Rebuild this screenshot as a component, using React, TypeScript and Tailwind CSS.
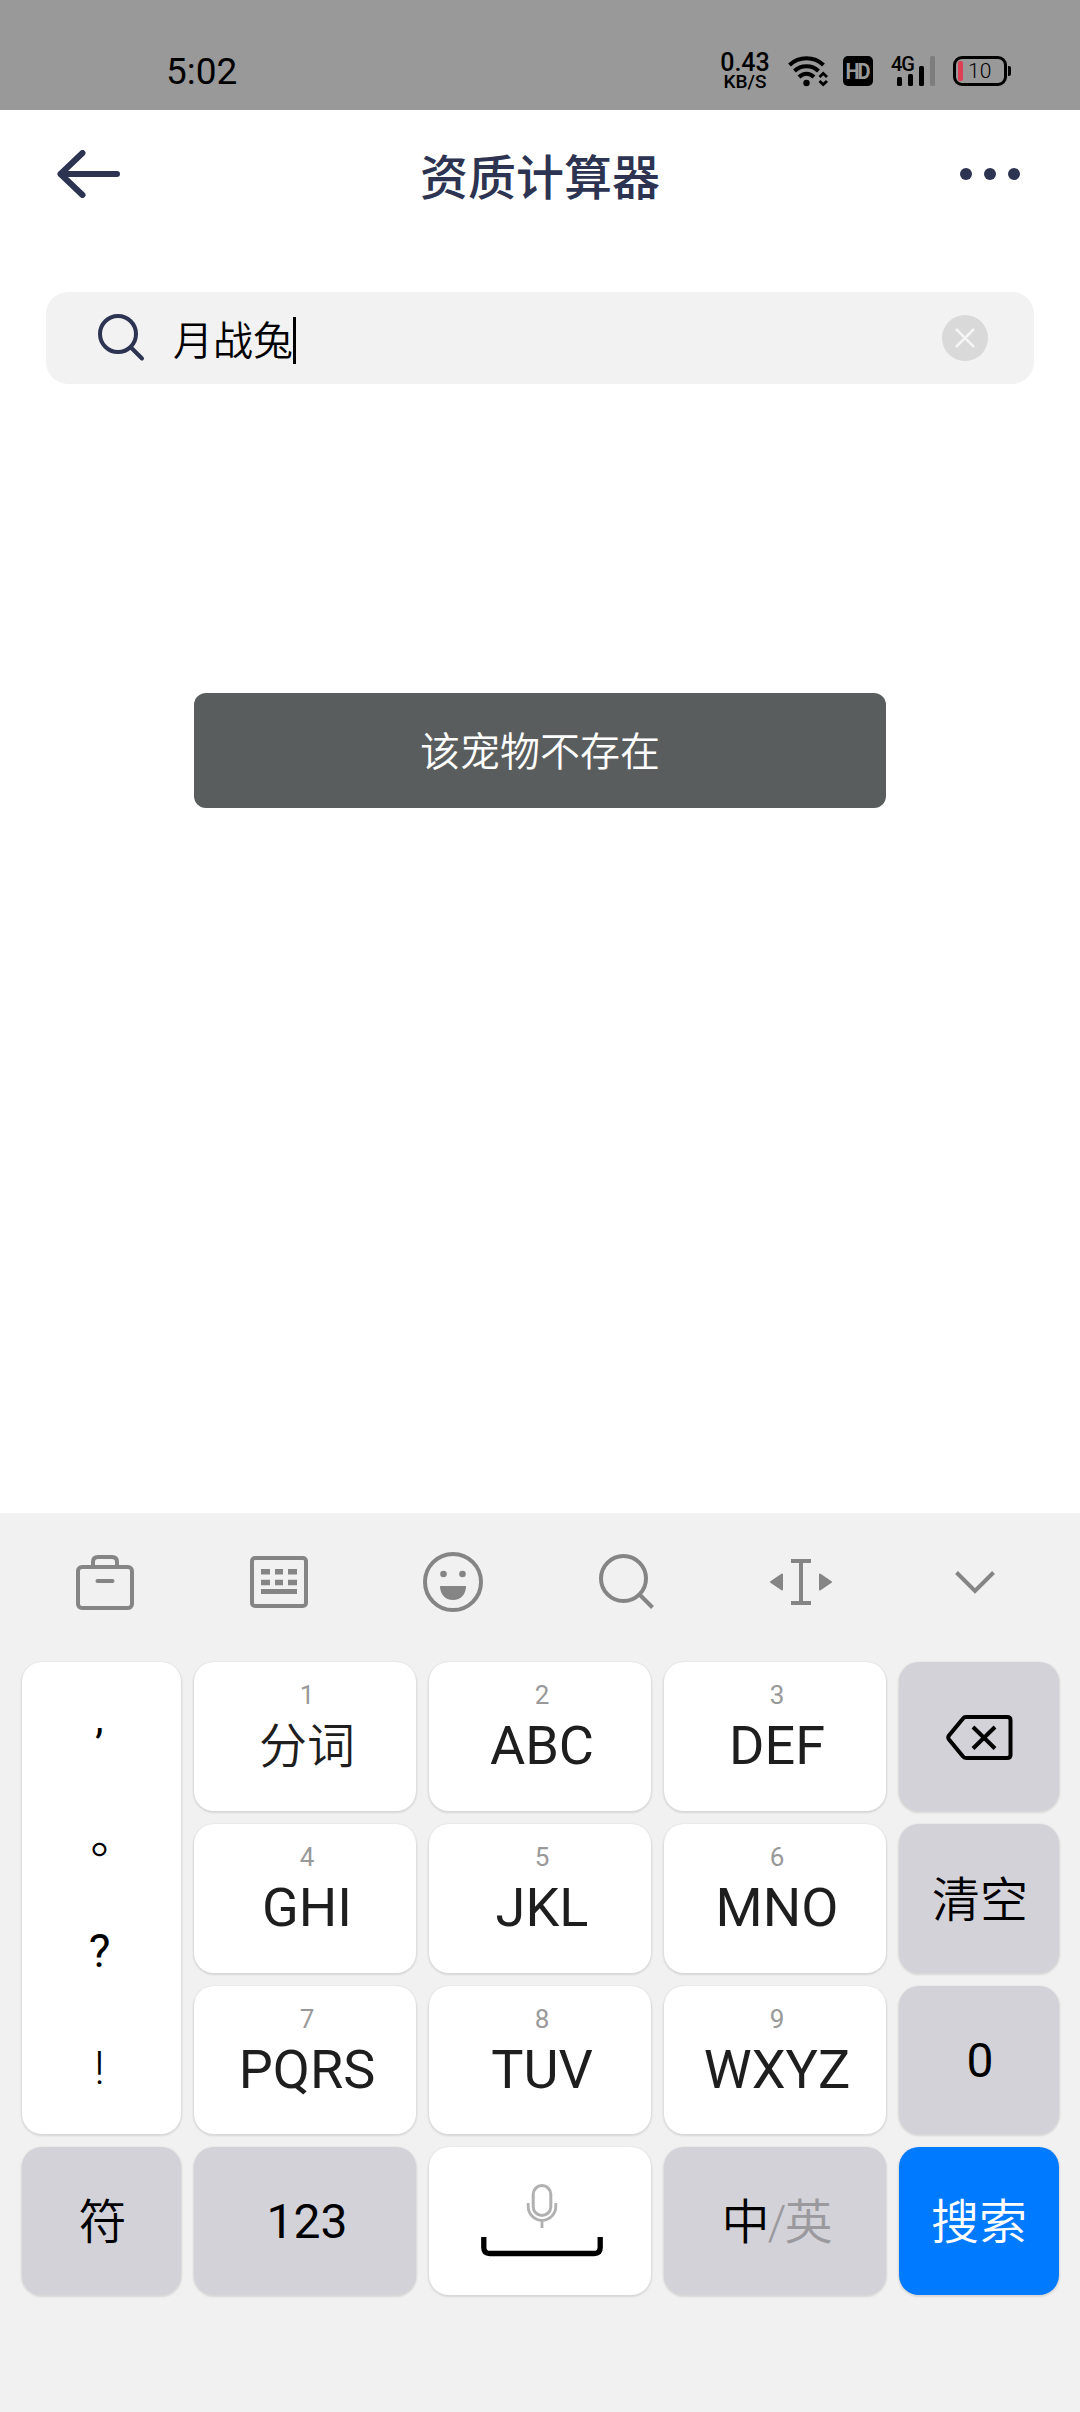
import { useState } from 'react'
import clsx from 'clsx'

const LETTER_KEYS = [
  ["1", "分词"], ["2", "ABC"], ["3", "DEF"],
  ["4", "GHI"], ["5", "JKL"], ["6", "MNO"],
  ["7", "PQRS"], ["8", "TUV"], ["9", "WXYZ"],
]

const keyBase = "flex items-center justify-center rounded-[20px] shadow-[0_1px_2px_1px_rgba(0,0,0,0.11)]"
const greyKey = "bg-[#d3d2d8] text-black"

function StatusBar() {
  return (
    <div className="flex h-[110px] items-start justify-between bg-[#999] pl-[166px] pr-[69px] pt-[54px] text-black">
      <div className="text-[37px] leading-[35px]">5:02</div>

      <div className="flex items-start">
        <div className="mr-[17px] flex w-[52px] flex-col items-center font-medium">
          <span className="text-[25px] leading-[18px]">0.43</span>
          <span className="mt-[3px] text-[19px] leading-[14px]">KB/S</span>
        </div>

        <svg className="mr-[15px] mt-0.5" width="40" height="31" viewBox="0 0 40 31" fill="none" stroke="black" strokeWidth="4">
          <path d="M1.500 9 C11 0 26 0 35.500 9" />
          <path d="M6.500 15 C13 8.500 24 8.500 30.500 15" />
          <path d="M11 21 C15.500 16.500 21.500 16.500 26 21" />
          <circle cx="18.500" cy="27" r="3.200" fill="black" stroke="none" />
          <path d="M31.500 21 L35.200 17.500 L39 21 M31.500 25 L35.200 28.500 L39 25" strokeWidth="2.800" />
        </svg>

        <div className="mr-[18px] mt-0.5 flex h-[30px] w-[30px] items-center justify-center rounded-[5px] bg-black text-[20px] font-bold leading-none tracking-[-2px] text-[#999]">
          <span className="-ml-[2px] scale-y-110">HD</span>
        </div>

        <div className="relative mr-[18px] mt-0.5 h-[30px] w-[44px]">
          <span className="absolute left-0 top-0 text-[20px] font-medium leading-[16px] tracking-[-1px]">4G</span>
          <svg width="44" height="30" viewBox="0 0 44 30" fill="black">
            <rect x="6" y="21" width="5" height="9" rx="1.500" />
            <rect x="17" y="18" width="5" height="12" rx="1.500" />
            <rect x="28" y="10" width="5" height="20" rx="1.500" />
            <rect x="39" y="0" width="5" height="30" rx="1.500" fill="#7d7d7d" />
          </svg>
        </div>

        <div className="mt-0.5 flex items-center">
          <div className="flex h-[30px] w-[54px] items-center rounded-[9px] border-[3px] border-black pl-0.5">
            <div className="h-5 w-[5px] rounded-[2px] bg-[#dd3f55]" />
            <span className="ml-[5px] text-[21px] font-light leading-none">10</span>
          </div>
          <div className="ml-px h-[10px] w-[3px] rounded-r-[2px] bg-black" />
        </div>
      </div>
    </div>
  )
}

function Header() {
  return (
    <header className="flex h-[128px] items-center justify-between pl-[57px] pr-[60px] text-[#2d3452]">
      <svg width="63" height="48" viewBox="0 0 63 48" fill="none" stroke="currentColor" strokeWidth="6" strokeLinecap="round" strokeLinejoin="round">
        <path d="M25.500 3 L3.500 24 L25.500 45 M3.500 24 H60" />
      </svg>
      <h1 className="pt-[10px] text-[48px] font-medium leading-[52px]">资质计算器</h1>
      <svg width="60" height="12" viewBox="0 0 60 12" fill="currentColor">
        <circle cx="6" cy="6" r="6" />
        <circle cx="30" cy="6" r="6" />
        <circle cx="54" cy="6" r="6" />
      </svg>
    </header>
  )
}

function Toolbar() {
  return (
    <div className="flex h-[138px] items-center px-[18px]">
      <div className="flex w-[174px] justify-center">
        <svg width="60" height="60" viewBox="0 0 60 60" fill="none" stroke="#858585" strokeWidth="4">
          <rect x="3" y="15" width="54" height="41" rx="4" />
          <path d="M18 15 V10 Q18 5 23 5 H37 Q42 5 42 10 V15" />
          <path d="M22.500 29 H37.500" strokeLinecap="round" />
        </svg>
      </div>
      <div className="flex w-[174px] justify-center">
        <svg width="60" height="60" viewBox="0 0 60 60" fill="#858585">
          <rect x="3" y="6" width="54" height="48" rx="3" fill="none" stroke="#858585" strokeWidth="4" />
          <path d="M12 17h9v5.500h-9z M26 17h8v5.500h-8z M39 17h9v5.500h-9z" />
          <path d="M12 27.800h9v5.500h-9z M26 27.800h8v5.500h-8z M39 27.800h9v5.500h-9z" />
          <path d="M12 37h36v5h-36z" />
        </svg>
      </div>
      <div className="flex w-[174px] justify-center">
        <svg width="60" height="60" viewBox="0 0 60 60" fill="#858585">
          <circle cx="30" cy="30" r="28" fill="none" stroke="#858585" strokeWidth="4" />
          <circle cx="20.500" cy="22" r="3.300" />
          <circle cx="39.500" cy="22" r="3.300" />
          <path d="M17 34 H43 C43 42 38 48 30 48 C22 48 17 42 17 34 Z" />
        </svg>
      </div>
      <div className="flex w-[174px] justify-center">
        <svg width="60" height="60" viewBox="0 0 60 60" fill="none" stroke="#858585" strokeWidth="4">
          <circle cx="26.500" cy="26.500" r="22.500" />
          <path d="M43 43 L55.500 55.500" />
        </svg>
      </div>
      <div className="flex w-[174px] justify-center">
        <svg width="64" height="60" viewBox="0 0 64 60" fill="#858585">
          <path d="M24 9 H40 M24 51 H40" stroke="#858585" strokeWidth="4" strokeLinecap="square" />
          <path d="M32 9 V51" stroke="#858585" strokeWidth="4" />
          <path d="M2 30 L13 22.500 V37.500 Z M62 30 L51 22.500 V37.500 Z" stroke="#858585" strokeWidth="2" strokeLinejoin="round" />
        </svg>
      </div>
      <div className="flex w-[174px] justify-center">
        <svg width="60" height="60" viewBox="0 0 60 60" fill="none" stroke="#858585" strokeWidth="4">
          <path d="M11.500 20.500 L30 39 L48.500 20.500" />
        </svg>
      </div>
    </div>
  )
}

function Keyboard() {
  return (
    <section className="h-[899px] bg-[#f1f1f1]">
      <Toolbar />

      <div className="mt-[11px] grid grid-cols-[159px_222px_222px_222px_160px] grid-rows-[149px_149px_148px_148px] gap-[13px] pl-[22px]">
        <div className={clsx(keyBase, "col-start-1 row-span-3 row-start-1 flex-col bg-white pr-[4px] text-[46px] text-black")}>
          <span className="h-[92px] text-[42px] leading-[74px]">,</span>
          <span className="h-[116px] pl-[28px] font-[350] leading-[126px]">。</span>
          <span className="h-[112px] leading-[122px]">?</span>
          <span className="h-[112px] font-light leading-[132px]">!</span>
        </div>

        <div className="col-span-3 row-span-3 grid grid-cols-3 grid-rows-[149px_149px_148px] gap-[13px]">
          {LETTER_KEYS.map(([num, label]) => (
            <button key={num} className={clsx(keyBase, "flex-col bg-white pb-[17px] pl-[4px]")}>
              <span className="text-[26px] leading-[30px] text-[#999]">{num}</span>
              <span
                className={clsx(
                  "mt-[6px] h-[60px] text-[#1e1e1e]",
                  num === "1" ? "text-[48px] font-[350] leading-[62px]" : "text-[54px] leading-[60px]"
                )}
              >
                {label}
              </span>
            </button>
          ))}
        </div>

        <button className={clsx(keyBase, greyKey, "col-start-5 row-start-1 pt-0.5")}>
          <svg width="67" height="47" viewBox="0 0 67 47" fill="none" stroke="black" strokeWidth="4">
            <path d="M20 3 H61 Q64.500 3 64.500 6 V41 Q64.500 44 61 44 H20 Q18 44 17 42.500 L3 25.500 Q1.500 23.500 3 21.500 L17 4.500 Q18 3 20 3 Z" />
            <path d="M27 13 L49 34.500 M49 13 L27 34.500" />
          </svg>
        </button>
        <button className={clsx(keyBase, greyKey, "col-start-5 row-start-2 pl-0.5 pt-[4px] text-[48px] font-[350]")}>清空</button>
        <button className={clsx(keyBase, greyKey, "col-start-5 row-start-3 pl-0.5 pt-0.5 text-[48px]")}>0</button>

        <button className={clsx(keyBase, greyKey, "row-start-4 pl-[2px] pt-[4px] text-[48px] font-[350]")}>符</button>
        <button className={clsx(keyBase, greyKey, "row-start-4 pl-[4px] pt-0.5 text-[48px]")}>123</button>
        <button className={clsx(keyBase, "row-start-4 bg-white pl-[4px]")}>
          <svg width="122" height="76" viewBox="0 0 122 76" fill="none">
            <rect x="52.200" y="2.500" width="17.600" height="30" rx="8.800" stroke="#b0b0b0" strokeWidth="3" />
            <path d="M47.200 20 V23.500 A13.800 13.800 0 0 0 74.800 23.500 V20 M61 37 V45" stroke="#b0b0b0" strokeWidth="2.800" />
            <path d="M2.800 54 V64.500 Q2.800 70.500 8.800 70.500 H113.200 Q119.200 70.500 119.200 64.500 V54" stroke="black" strokeWidth="5.300" />
          </svg>
        </button>
        <button className={clsx(keyBase, greyKey, "row-start-4 pl-[4px] pt-[4px] text-[48px] font-[350] text-[#1e1e1e]")}>
          <span>中</span>
          <span className="-ml-[2px] text-[#9a999e]">/</span>
          <span className="-ml-[2px] text-[#9a999e]">英</span>
        </button>
        <button className={clsx(keyBase, "row-start-4 bg-[#007aff] pt-[4px] text-[48px] font-[350] text-white")}>搜索</button>
      </div>
    </section>
  )
}

function App() {
  const [query, setQuery] = useState("月战兔")

  return (
    <main className="flex h-[2412px] w-[1080px] flex-col bg-white font-[Roboto,'Noto_Sans_CJK_SC',sans-serif]">
      <StatusBar />
      <Header />

      <div className="mx-[46px] mt-[54px] flex h-[92px] items-center rounded-[22px] bg-[#f2f2f2] pl-[51px] pr-[46px]">
        <svg width="48" height="48" viewBox="0 0 48 48" fill="none" stroke="#2d3452" strokeWidth="4">
          <circle cx="21" cy="20" r="18" />
          <path d="M34 33.500 L45 44.500" strokeLinecap="round" />
        </svg>
        <div className="ml-[28px] flex flex-1 items-center">
          <span className="pt-[8px] text-[40px] font-[350] leading-[48px] text-black">{query}</span>
          <span className="mt-[5px] h-[47px] w-[3px] bg-black" />
        </div>
        <button onClick={() => setQuery("")} className="flex h-[46px] w-[46px] items-center justify-center rounded-full bg-[#d9d9d9]">
          <svg width="20" height="20" viewBox="0 0 20 20" stroke="#f5f5f5" strokeWidth="2.500">
            <path d="M1 1 L19 19 M19 1 L1 19" />
          </svg>
        </button>
      </div>

      <div className="mx-[194px] mt-[309px] flex h-[115px] items-center justify-center rounded-[12px] bg-[#5a5d5d] pt-[4px] text-[40px] font-[350] text-white">
        该宠物不存在
      </div>

      <div className="flex-1" />
      <Keyboard />
    </main>
  )
}
export default App
